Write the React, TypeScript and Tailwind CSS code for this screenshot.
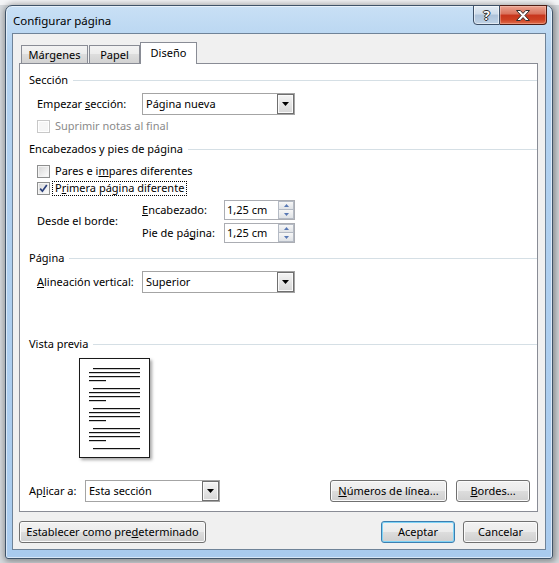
import React from "react";

const T = "leading-[15px] pb-[2px]";

const btnBase =
  "h-[22px] rounded-[3px] border flex items-center justify-center bg-[linear-gradient(to_bottom,#f2f2f2_0%,#ebebeb_50%,#dddddd_50%,#cfcfcf_100%)]";

function Check({ checked, disabled }: { checked?: boolean; disabled?: boolean }) {
  return (
    <span
      className={
        disabled
          ? "w-[13px] h-[13px] shrink-0 border border-[#c8c8c8] bg-[#f6f6f6] shadow-[inset_0_0_0_1px_#ffffff]"
          : "w-[13px] h-[13px] shrink-0 border border-[#8e8f8f] bg-[linear-gradient(135deg,#d6d6d6,#ffffff)] shadow-[inset_0_0_0_1px_#f4f4f4] flex items-center justify-center"
      }
    >
      {checked && (
        <svg width="11" height="11" viewBox="0 0 11 11">
          <path d="M2.2 5.6 L4.4 8.2 L8.8 2" fill="none" stroke="#2a3f7a" strokeWidth="1.7" />
        </svg>
      )}
    </span>
  );
}

function DropArrow() {
  return (
    <span className="w-[17px] h-[20px] border border-[#6f6f6f] bg-[linear-gradient(to_bottom,#f4f4f4,#d6d6d6)] shadow-[inset_0_0_0_1px_#fafafa] flex items-center justify-center">
      <svg width="7" height="4" viewBox="0 0 7 4">
        <path d="M0 0 H7 L3.5 4 Z" fill="#000" />
      </svg>
    </span>
  );
}

function Select({ className, text }: { className: string; text: string }) {
  return (
    <div className={`h-[22px] border border-[#a4a4a4] bg-white flex items-center ${className}`}>
      <span className={`flex-1 pl-[3px] ${T}`}>{text}</span>
      <DropArrow />
    </div>
  );
}

function Spin({ text }: { text: string }) {
  return (
    <div className="w-[71px] h-[20px] border border-[#abadb3] bg-white flex items-center">
      <span className={`flex-1 pl-[2px] ${T}`}>{text}</span>
      <div className="w-[16px] h-[18px] flex flex-col">
        <span className="h-[9px] border border-[#b4bac4] bg-[linear-gradient(to_bottom,#f7f7f7,#dfe2e6)] flex items-center justify-center">
          <svg width="5" height="3" viewBox="0 0 5 3">
            <path d="M0 3 H5 L2.5 0 Z" fill="#5878b4" />
          </svg>
        </span>
        <span className="h-[9px] border border-[#b4bac4] border-t-0 bg-[linear-gradient(to_bottom,#f7f7f7,#dfe2e6)] flex items-center justify-center">
          <svg width="5" height="3" viewBox="0 0 5 3">
            <path d="M0 0 H5 L2.5 3 Z" fill="#5878b4" />
          </svg>
        </span>
      </div>
    </div>
  );
}

function Header({ text, className }: { text: string; className: string }) {
  return (
    <div className={`h-[16px] flex items-center ${className}`}>
      <span className={T}>{text}</span>
      <span className="flex-1 h-px bg-[#d5dfe5] ml-[5px]" />
    </div>
  );
}

function PreviewPage() {
  const groups = [10, 30, 50, 70];
  return (
    <div className="w-[71px] h-[100px] border border-[#1a1a1a] bg-white shadow-[2px_2px_3px_rgba(0,0,0,0.35)]">
      <svg width="69" height="98" viewBox="0 0 69 98">
        {groups.map((g) => (
          <g key={g} fill="#111">
            <rect x="13" y={g - 1} width="47" height="1.2" />
            <rect x="9" y={g + 3} width="51" height="1.2" />
            <rect x="9" y={g + 7} width="51" height="1.2" />
            <rect x="9" y={g + 11} width="17" height="1.2" />
          </g>
        ))}
        <rect x="13" y="89" width="47" height="1.2" fill="#111" />
      </svg>
    </div>
  );
}

export default function App() {
  return (
    <div className="w-[559px] h-[563px] overflow-hidden bg-[linear-gradient(to_bottom,#f4f5f7_0px,#f4f5f7_5px,#d6dade_5px,#d6dade_100%)] pt-[5px] pl-[5px] font-['Noto_Sans',sans-serif] text-[11px] text-black">
      <div className="w-[548px] h-[554px] rounded-t-[7px] rounded-b-[3px] border border-[#3f5368] bg-[linear-gradient(to_bottom,#c9e0f5_0%,#b3d2f0_8%,#a9cbee_100%)] shadow-[1px_1px_6px_2px_rgba(0,0,0,0.35),inset_0_0_0_1px_rgba(255,255,255,0.55)] flex flex-col">
        {/* Title bar */}
        <div className="h-[27px] flex items-start">
          <span className="ml-[7px] mt-[7px] leading-[15px] text-[11.5px] text-black">Configurar página</span>
          <div className="ml-auto mr-[5px] -mt-px flex">
            <div className="w-[27px] h-[20px] border border-[#3d4f66] rounded-bl-[4px] bg-[linear-gradient(to_bottom,#e2ebf4_0%,#cfdcea_45%,#adc2d9_50%,#bfd2e6_100%)] shadow-[inset_0_0_0_1px_rgba(255,255,255,0.55)] flex items-center justify-center">
              <span className="text-white font-bold text-[13px] leading-[14px] [text-shadow:1px_0_0_#2b2b2b,-1px_0_0_#2b2b2b,0_1px_0_#2b2b2b,0_-1px_0_#2b2b2b]">?</span>
            </div>
            <div className="w-[47px] h-[20px] border border-l-0 border-[#4d1d15] rounded-br-[4px] bg-[linear-gradient(to_bottom,#eba391_0%,#d9705a_45%,#c7351c_50%,#cd4022_75%,#e06c4b_100%)] shadow-[inset_0_0_0_1px_rgba(255,220,210,0.35)] flex items-center justify-center">
              <svg width="14" height="11" viewBox="0 0 14 11">
                <path
                  d="M0.5 0.5 H4.3 L7 3.4 L9.7 0.5 H13.5 L8.9 5.5 L13.5 10.5 H9.7 L7 7.6 L4.3 10.5 H0.5 L5.1 5.5 Z"
                  fill="#ffffff"
                  stroke="#2e2e2e"
                  strokeWidth="1"
                  strokeLinejoin="round"
                />
              </svg>
            </div>
          </div>
        </div>

        {/* Client area */}
        <div className="mx-[6px] h-[517px] border border-[#6f8398] bg-[#f0f0f0] flex flex-col">
          {/* Tabs */}
          <div className="mt-[8px] ml-[8px] h-[21px] flex items-end">
            <div className="w-[67px] h-[18px] border border-b-0 border-[#898c95] bg-[linear-gradient(to_bottom,#f3f3f3_0%,#ebebeb_50%,#dddddd_50%,#d2d2d2_100%)] flex items-center justify-center leading-[15px]">
              Márgenes
            </div>
            <div className="ml-px w-[51px] h-[18px] border border-b-0 border-[#898c95] bg-[linear-gradient(to_bottom,#f3f3f3_0%,#ebebeb_50%,#dddddd_50%,#d2d2d2_100%)] flex items-center justify-center leading-[15px]">
              Papel
            </div>
            <div className="w-[57px] h-[22px] -mb-px relative z-10 border border-b-0 border-[#898c95] bg-white flex items-center justify-center leading-[15px] pb-[2px]">
              Diseño
            </div>
          </div>

          {/* Panel */}
          <div className="ml-[6px] w-[519px] h-[449px] border border-[#898c95] bg-white flex flex-col pl-[9px]">
            <Header text="Sección" className="mt-[8px]" />

            <div className="mt-[5px] h-[22px] flex items-center pl-[8px]">
              <span className={`w-[105px] ${T}`}>
                Empezar <u>s</u>ección:
              </span>
              <Select className="w-[153px]" text="Página nueva" />
            </div>

            <div className="mt-[3px] h-[16px] flex items-center pl-[8px] gap-[5px]">
              <Check disabled />
              <span className={`text-[#8a8a8a] ${T}`}>Suprimir notas al final</span>
            </div>

            <Header text="Encabezados y pies de página" className="mt-[7px]" />

            <div className="mt-[6px] h-[16px] flex items-center pl-[8px] gap-[5px]">
              <Check />
              <span className={T}>
                Pares e i<u>m</u>pares diferentes
              </span>
            </div>

            <div className="mt-[1px] h-[16px] flex items-center pl-[8px] gap-[2px]">
              <Check checked />
              <span className="leading-[12px] border border-dotted border-black px-[2px] pb-px">
                P<u>r</u>imera página diferente
              </span>
            </div>

            <div className="mt-[4px] flex items-center pl-[8px]">
              <span className={`w-[105px] ${T}`}>Desde el borde:</span>
              <div className="flex flex-col gap-[3px]">
                <div className="h-[20px] flex items-center">
                  <span className={`w-[82px] ${T}`}>
                    <u>E</u>ncabezado:
                  </span>
                  <Spin text="1,25 cm" />
                </div>
                <div className="h-[20px] flex items-center">
                  <span className={`w-[82px] ${T}`}>
                    Pie de pá<u>g</u>ina:
                  </span>
                  <Spin text="1,25 cm" />
                </div>
              </div>
            </div>

            <Header text="Página" className="mt-[7px]" />

            <div className="mt-[5px] h-[22px] flex items-center pl-[8px]">
              <span className={`w-[105px] ${T}`}>
                <u>A</u>lineación vertical:
              </span>
              <Select className="w-[153px]" text="Superior" />
            </div>

            <Header text="Vista previa" className="mt-[43px]" />

            <div className="mt-[6px] ml-[50px]">
              <PreviewPage />
            </div>

            <div className="mt-[22px] h-[22px] flex items-center pr-[7px]">
              <span className={`w-[56px] ${T}`}>
                Ap<u>l</u>icar a:
              </span>
              <Select className="w-[135px]" text="Esta sección" />
              <div className={`ml-auto w-[117px] border-[#707070] shadow-[inset_0_0_0_1px_#fbfbfb] ${btnBase}`}>
                <span className={T}>
                  <u>N</u>úmeros de línea...
                </span>
              </div>
              <div className={`ml-[9px] w-[74px] border-[#707070] shadow-[inset_0_0_0_1px_#fbfbfb] ${btnBase}`}>
                <span className={T}>
                  <u>B</u>ordes...
                </span>
              </div>
            </div>
          </div>

          {/* Bottom buttons */}
          <div className="mt-[9px] flex items-center pl-[6px] pr-[7px]">
            <div className={`w-[187px] border-[#707070] shadow-[inset_0_0_0_1px_#fbfbfb] ${btnBase}`}>
              <span className={T}>
                Establecer como pre<u>d</u>eterminado
              </span>
            </div>
            <div className={`ml-auto w-[74px] border-[#3c7fb1] shadow-[inset_0_0_0_1px_#7fd3f6] ${btnBase}`}>
              <span className={T}>Aceptar</span>
            </div>
            <div className={`ml-[8px] w-[75px] border-[#707070] shadow-[inset_0_0_0_1px_#fbfbfb] ${btnBase}`}>
              <span className={T}>Cancelar</span>
            </div>
          </div>
        </div>
      </div>
    </div>
  );
}
